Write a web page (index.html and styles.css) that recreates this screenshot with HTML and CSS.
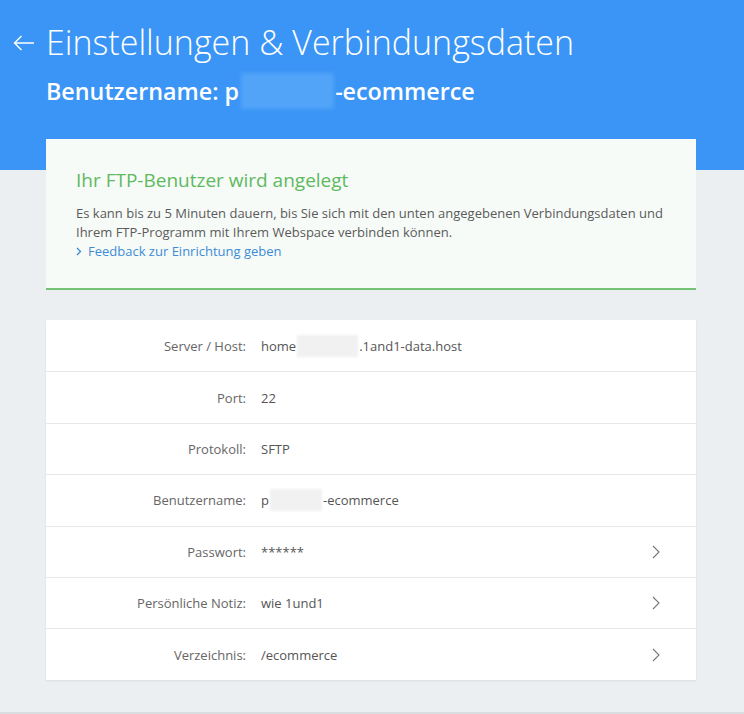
FILE: index.html
```html
<!DOCTYPE html>
<html lang="de">
<head>
<meta charset="utf-8">
<link rel="stylesheet" href="styles.css">
</head>
<body>
<header class="hero">
  <h1 class="title">
    <svg class="back" width="22" height="16" viewBox="0 0 22 16"><path d="M21 8H1.5M8.5 1L1.5 8l7 7" fill="none" stroke="#fff" stroke-width="1.4"/></svg>
    <span>Einstellungen &amp; Verbindungsdaten</span>
  </h1>
  <div class="subtitle">Benutzername: p<span class="blur-h"></span>-ecommerce</div>
</header>
<main class="content">
  <section class="notice">
    <h2 class="notice-title">Ihr FTP-Benutzer wird angelegt</h2>
    <p class="notice-text">Es kann bis zu 5 Minuten dauern, bis Sie sich mit den unten angegebenen Verbindungsdaten und Ihrem FTP-Programm mit Ihrem Webspace verbinden können.</p>
    <a class="notice-link" href="#"><svg width="6" height="9" viewBox="0 0 6 9"><path d="M1 1l3.5 3.5L1 8" fill="none" stroke="#3d8bd6" stroke-width="1.3"/></svg>Feedback zur Einrichtung geben</a>
  </section>
  <section class="details">
    <div class="row"><div class="label">Server / Host:</div><div class="value">home<span class="blur-r w61"></span>.1and1-data.host</div></div>
    <div class="row"><div class="label">Port:</div><div class="value">22</div></div>
    <div class="row"><div class="label">Protokoll:</div><div class="value">SFTP</div></div>
    <div class="row"><div class="label">Benutzername:</div><div class="value">p<span class="blur-r w52"></span>-ecommerce</div></div>
    <div class="row"><div class="label">Passwort:</div><div class="value">******</div><svg class="chev" width="8" height="14" viewBox="0 0 8 14"><path d="M1 1l6 6-6 6" fill="none" stroke="#777" stroke-width="1.1"/></svg></div>
    <div class="row"><div class="label">Persönliche Notiz:</div><div class="value">wie 1und1</div><svg class="chev" width="8" height="14" viewBox="0 0 8 14"><path d="M1 1l6 6-6 6" fill="none" stroke="#777" stroke-width="1.1"/></svg></div>
    <div class="row"><div class="label">Verzeichnis:</div><div class="value">/ecommerce</div><svg class="chev" width="8" height="14" viewBox="0 0 8 14"><path d="M1 1l6 6-6 6" fill="none" stroke="#777" stroke-width="1.1"/></svg></div>
  </section>
</main>
<footer class="foot"></footer>
</body>
</html>
```
FILE: styles.css
```css
* { box-sizing: border-box; }
html, body { margin: 0; padding: 0; }
body {
  background: #eceff2;
  font-family: "Open Sans", "Liberation Sans", sans-serif;
  color: #555;
  width: 744px;
  height: 714px;
  overflow: hidden;
}
.hero {
  background: #3a95f6;
  color: #fff;
  height: 170px;
  padding: 22px 0 0 0;
}
.title {
  margin: 0;
  display: flex;
  align-items: center;
  font-weight: 300;
  font-size: 34px;
  line-height: 41px;
}
.back { margin: 0 11px 0 13px; flex: none; }
.subtitle {
  margin: 13px 0 0 46px;
  font-weight: 600;
  font-size: 23.3px;
  line-height: 30px;
  height: 30px;
  display: flex;
  align-items: center;
}
.blur-h {
  display: inline-block;
  width: 93px;
  height: 36px;
  margin: 0 1px 0 2px;
  background: #52a4f8;
  filter: blur(2px);
}
.content {
  margin: -31px 48px 0 46px;
  position: relative;
}
.notice {
  background: #f7fbf8;
  border-bottom: 2px solid #74c374;
  padding: 29px 30px 27px 30px;
  height: 151px;
}
.notice-title {
  margin: 0 0 12px 0;
  font-weight: 400;
  font-size: 19px;
  line-height: 24px;
  color: #5fb95f;
}
.notice-text {
  margin: 0;
  font-size: 13px;
  line-height: 19px;
  color: #5a5a5a;
}
.notice-link {
  display: flex;
  align-items: center;
  gap: 6px;
  font-size: 13px;
  line-height: 19px;
  color: #3d8bd6;
  text-decoration: none;
}
.details {
  margin-top: 30px;
  background: #fff;
  box-shadow: 0 1px 2px rgba(0,0,0,0.08);
}
.row {
  display: flex;
  align-items: center;
  height: 51.4px;
  border-top: 1px solid #e5e7e9;
  font-size: 13px;
}
.row:first-child { border-top: none; }
.label {
  width: 200px;
  text-align: right;
  color: #666;
}
.value {
  flex: 1;
  margin-left: 15px;
  color: #555;
  display: flex;
  align-items: center;
}
.blur-r {
  display: inline-block;
  height: 22px;
  background: #f1f1f1;
  filter: blur(1px);
}
.w61 { width: 61px; margin: 0 1px 0 1px; }
.w52 { width: 52px; margin: 0 1px 0 1px; }
.chev { margin-right: 36px; flex: none; }
.foot {
  margin-top: 32px;
  border-top: 2px solid #dadde0;
}
```
